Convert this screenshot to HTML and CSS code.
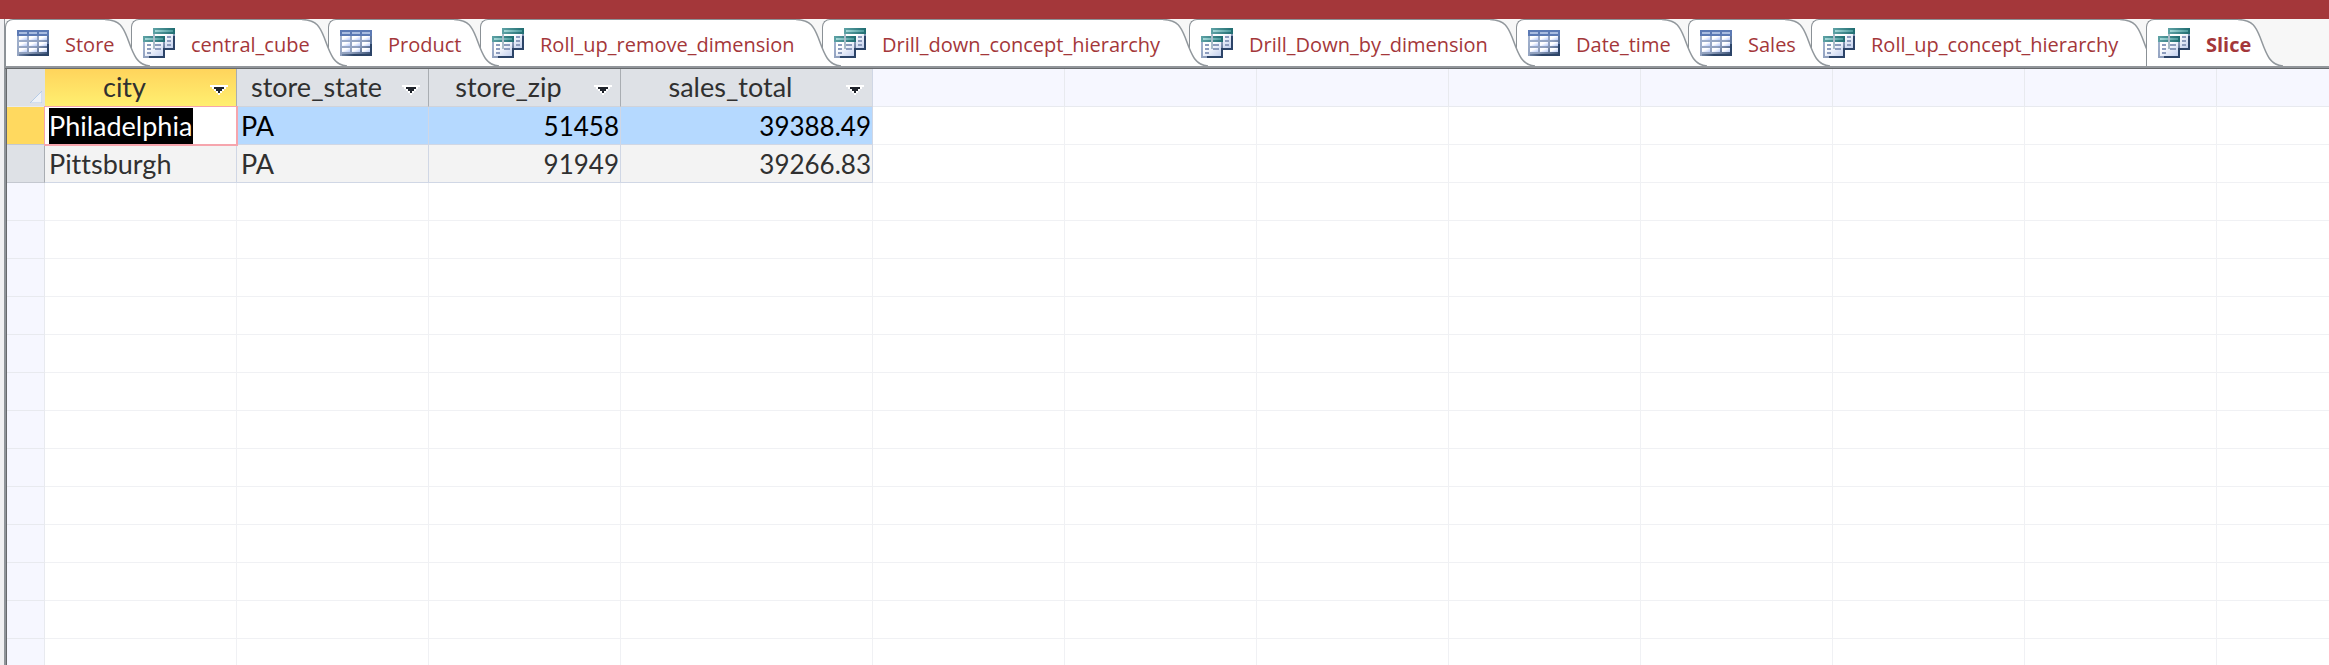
FILE: index.html
```html
<!DOCTYPE html>
<html lang="en">
<head>
<meta charset="utf-8">
<title>Slice</title>
<link rel="stylesheet" href="styles.css">
</head>
<body>
<svg class="defs" aria-hidden="true">
  <defs>
    <linearGradient id="cell" x1="0" y1="0" x2="1" y2="1"><stop offset="0.4" stop-color="#ffffff"/><stop offset="1" stop-color="#b4c8fa"/></linearGradient>
    <linearGradient id="frame" x1="0" y1="0" x2="1" y2="1"><stop offset="0" stop-color="#a9b9d4"/><stop offset="0.6" stop-color="#8f9fbd"/><stop offset="1" stop-color="#2c4468"/></linearGradient>
    <linearGradient id="edge" x1="0" y1="0" x2="1" y2="0"><stop offset="0" stop-color="#6f84a6"/><stop offset="0.4" stop-color="#2c4468"/></linearGradient>
    <linearGradient id="teal" x1="0" y1="0" x2="1" y2="0"><stop offset="0" stop-color="#5fa3a6"/><stop offset="1" stop-color="#1f6c70"/></linearGradient>
    <linearGradient id="shine" x1="0" y1="0" x2="1" y2="0"><stop offset="0" stop-color="#a5d8d8"/><stop offset="1" stop-color="#4d9a9c"/></linearGradient>
    <linearGradient id="page" x1="0" y1="0" x2="1" y2="1"><stop offset="0.3" stop-color="#ffffff"/><stop offset="1" stop-color="#c3d0ee"/></linearGradient>
    <symbol id="table" viewBox="0 0 32 26">
      <path fill="url(#frame)" d="M0 0h32v26H0z"/>
      <path fill="#5b79b4" d="M0 0h32v6H0z"/>
      <path fill="#a9bce0" d="M2 2h8v2H2zM12 2h8v2h-8zM22 2h8v2h-8z"/>
      <path fill="url(#edge)" d="M2 24h30v2H2z"/>
      <path fill="#5e759c" d="M30 6h2v8h-2z"/>
      <path fill="#2c4468" d="M30 14h2v12h-2z"/>
      <g fill="url(#cell)"><path d="M2 6h8v4H2z"/><path d="M12 6h8v4h-8z"/><path d="M22 6h8v4h-8z"/><path d="M2 12h8v4H2z"/><path d="M12 12h8v4h-8z"/><path d="M22 12h8v4h-8z"/><path d="M2 18h8v4H2z"/><path d="M12 18h8v4h-8z"/><path d="M22 18h8v4h-8z"/></g>
    </symbol>
    <symbol id="query" viewBox="0 0 32 30">
      <path fill="url(#frame)" d="M10 0h22v22H10z"/>
      <path fill="url(#page)" d="M12 6h18v14H12z"/>
      <path fill="url(#teal)" d="M10 0h22v6H10z"/>
      <path fill="url(#shine)" d="M12 2h18v2H12z"/>
      <path fill="#2c4468" d="M22 20h10v2H22zM30 8h2v14h-2z"/>
      <path fill="#8c9cbd" d="M24 8h4v2h-4zM24 12h4v2h-4zM24 16h4v2h-4z"/>
      <path fill="url(#frame)" d="M0 8h22v22H0z"/>
      <path fill="url(#page)" d="M2 14h18v14H2z"/>
      <path fill="url(#teal)" d="M0 8h22v6H0z"/>
      <path fill="url(#shine)" d="M2 10h18v2H2z"/>
      <path fill="none" stroke="#a9bcc8" stroke-width="2" d="M11 6v15"/>
      <path fill="#2c4468" d="M6 28h16v2H6zM20 20h2v10h-2z"/>
      <path fill="#8c9cbd" d="M4 16h4v2H4zM12 16h6v2h-6zM4 20h4v2H4zM12 20h6v2h-6zM4 24h4v2H4z"/>
    </symbol>
    <symbol id="tail" viewBox="0 0 46 47">
      <path class="tail-fill" d="M0 0C15 1 18 7 22 18C28 34 31 46 45 47H0z"/>
      <path class="tail-line" d="M0 0.500C15 1 18 8 22 18C28 34 31 46 45 47"/>
    </symbol>
    <symbol id="arrow" viewBox="0 0 18 10">
      <path fill="#fff" d="M0 0h18v2h-2v2h-2v2h-2v2h-2v2H8V8H6V6H4V4H2V2H0z"/>
      <path fill="#20242c" d="M4 2h10v2h-2v2h-2v2H8V6H6V4H4z"/>
    </symbol>
  </defs>
</svg>

<div class="titlebar"></div>
<main class="workspace">
  <nav class="tabs" role="tablist" aria-label="Open objects">
    <button class="tab" role="tab" style="--w:126px;--z:10"><svg class="icon icon-table"><use href="#table"/></svg><span>Store</span><svg class="tail"><use href="#tail"/></svg></button>
    <button class="tab" role="tab" style="--w:197px;--z:9"><svg class="icon icon-query"><use href="#query"/></svg><span>central_cube</span><svg class="tail"><use href="#tail"/></svg></button>
    <button class="tab" role="tab" style="--w:152px;--z:8"><svg class="icon icon-table"><use href="#table"/></svg><span>Product</span><svg class="tail"><use href="#tail"/></svg></button>
    <button class="tab" role="tab" style="--w:342px;--z:7"><svg class="icon icon-query"><use href="#query"/></svg><span>Roll_up_remove_dimension</span><svg class="tail"><use href="#tail"/></svg></button>
    <button class="tab" role="tab" style="--w:367px;--z:6"><svg class="icon icon-query"><use href="#query"/></svg><span>Drill_down_concept_hierarchy</span><svg class="tail"><use href="#tail"/></svg></button>
    <button class="tab" role="tab" style="--w:327px;--z:5"><svg class="icon icon-query"><use href="#query"/></svg><span>Drill_Down_by_dimension</span><svg class="tail"><use href="#tail"/></svg></button>
    <button class="tab" role="tab" style="--w:172px;--z:4"><svg class="icon icon-table"><use href="#table"/></svg><span>Date_time</span><svg class="tail"><use href="#tail"/></svg></button>
    <button class="tab" role="tab" style="--w:123px;--z:3"><svg class="icon icon-table"><use href="#table"/></svg><span>Sales</span><svg class="tail"><use href="#tail"/></svg></button>
    <button class="tab" role="tab" style="--w:335px;--z:2"><svg class="icon icon-query"><use href="#query"/></svg><span>Roll_up_concept_hierarchy</span><svg class="tail"><use href="#tail"/></svg></button>
    <button class="tab active" role="tab" aria-selected="true" style="--w:118px;--z:11"><svg class="icon icon-query"><use href="#query"/></svg><span>Slice</span><svg class="tail"><use href="#tail"/></svg></button>
  </nav>
  <div class="sheet">
    <table>
      <colgroup><col class="c-select"><col class="c-std" span="3"><col class="c-total"><col class="c-std" span="7"><col></colgroup>
      <thead>
        <tr>
          <th class="corner"><svg class="corner-mark" viewBox="0 0 12 12"><path d="M0 12L12 0V12z"/></svg></th>
          <th class="field current"><div class="head"><span>city</span><button aria-label="Filter city"><svg><use href="#arrow"/></svg></button></div></th>
          <th class="field"><div class="head"><span>store_state</span><button aria-label="Filter store_state"><svg><use href="#arrow"/></svg></button></div></th>
          <th class="field"><div class="head"><span>store_zip</span><button aria-label="Filter store_zip"><svg><use href="#arrow"/></svg></button></div></th>
          <th class="field last"><div class="head"><span>sales_total</span><button aria-label="Filter sales_total"><svg><use href="#arrow"/></svg></button></div></th>
          <th><th><th><th><th><th><th><th>
        </tr>
      </thead>
      <tbody>
        <tr class="row selected"><th></th><td class="editing"><input value="Philadelphia" aria-label="city"></td><td>PA</td><td class="num">51458</td><td class="num">39388.49</td><td class="blank"><td class="blank"><td class="blank"><td class="blank"><td class="blank"><td class="blank"><td class="blank"><td class="blank"></tr>
        <tr class="row"><th></th><td>Pittsburgh</td><td>PA</td><td class="num">91949</td><td class="num">39266.83</td><td class="blank"><td class="blank"><td class="blank"><td class="blank"><td class="blank"><td class="blank"><td class="blank"><td class="blank"></tr>
        <tr><th><td><td><td><td><td><td><td><td><td><td><td><td></tr>
        <tr><th><td><td><td><td><td><td><td><td><td><td><td><td></tr>
        <tr><th><td><td><td><td><td><td><td><td><td><td><td><td></tr>
        <tr><th><td><td><td><td><td><td><td><td><td><td><td><td></tr>
        <tr><th><td><td><td><td><td><td><td><td><td><td><td><td></tr>
        <tr><th><td><td><td><td><td><td><td><td><td><td><td><td></tr>
        <tr><th><td><td><td><td><td><td><td><td><td><td><td><td></tr>
        <tr><th><td><td><td><td><td><td><td><td><td><td><td><td></tr>
        <tr><th><td><td><td><td><td><td><td><td><td><td><td><td></tr>
        <tr><th><td><td><td><td><td><td><td><td><td><td><td><td></tr>
        <tr><th><td><td><td><td><td><td><td><td><td><td><td><td></tr>
        <tr><th><td><td><td><td><td><td><td><td><td><td><td><td></tr>
        <tr><th><td><td><td><td><td><td><td><td><td><td><td><td></tr>
      </tbody>
    </table>
  </div>
</main>
</body>
</html>
```
FILE: styles.css
```css
* { box-sizing: border-box; }

body {
  margin: 0;
  height: 100vh;
  display: flex;
  flex-direction: column;
  overflow: hidden;
  background: #f0f0f2;
  font-family: Lato, "Open Sans", sans-serif;
  font-variant-ligatures: none;
}

.defs { position: absolute; width: 0; height: 0; }

button {
  padding: 0;
  border: 0;
  background: none;
  font: inherit;
  color: inherit;
}

.titlebar { flex: none; height: 19px; background: #a4373a; }

.workspace {
  flex: 1;
  min-height: 0;
  display: flex;
  flex-direction: column;
  margin-left: 4px;
  border-left: 2px solid #8f9499;
}

/* Object tabs */
.tabs {
  flex: none;
  display: flex;
  height: 50px;
  margin-left: -1px;
  padding-bottom: 2px;
  border-bottom: 1px solid #66696c;
  background: linear-gradient(#f7f7f7 47px, #92969b 47px);
}

.tab {
  position: relative;
  z-index: var(--z);
  flex: none;
  display: flex;
  align-items: center;
  width: calc(var(--w) - 26px);
  height: 47px;
  margin-right: 26px;
  padding-left: 11px;
  border-top: 1px solid #8b9196;
  border-left: 1px solid #8b9196;
  border-top-left-radius: 8px;
  background: #fff;
  font: 20px/28px "Open Sans", sans-serif;
  color: #a4373a;
  white-space: nowrap;
}

.tab span { position: relative; z-index: 1; padding-top: 4px; }

.icon { flex: none; width: 32px; margin-right: 16px; shape-rendering: crispEdges; }
.icon-table { height: 26px; }
.icon-query { height: 30px; }

.tail {
  position: absolute;
  top: -1px;
  left: 100%;
  width: 46px;
  height: 47px;
}

.tail-fill { fill: #fff; }
.tail-line { fill: none; stroke: #92989d; stroke-width: 1.5px; }

.tab.active { font-weight: 700; }

/* Datasheet */
.sheet {
  flex: 1;
  min-height: 0;
  overflow: hidden;
  border-left: 1px solid #66696c;
  background: #fff;
}

table {
  width: 100%;
  table-layout: fixed;
  border-collapse: separate;
  border-spacing: 0;
  font-size: 27px;
  line-height: 36px;
  color: #303030;
}

.c-select { width: 38px; }
.c-std { width: 192px; }
.c-total { width: 252px; }

th, td {
  height: 38px;
  padding: 0;
  border: solid #f0f1f4;
  border-width: 0 1px 1px 0;
  font-weight: 400;
  text-align: left;
  white-space: nowrap;
}

th { background: #f6f7ff; border-color: #e8eaef; }
tr > :last-child { border-right: 0; }

.corner { background: #dee1e6; border-right: 0; vertical-align: bottom; }
.corner-mark { display: block; width: 12px; height: 12px; margin: 0 0 3px 23px; fill: #eff2f7; stroke: #b5cbe6; }

.field { background: #dee1e6; border-color: #d0d3da; border-right-color: #a9adb2; }
.field.last { border-right-color: #d0d7e5; }
.field.current { background: linear-gradient(#ffd45c, #ffef70); }

.head { display: flex; align-items: center; height: 36px; }
.head span { flex: 1; text-align: center; padding-bottom: 2px; }
.head button { flex: none; width: 32px; padding-left: 6px; padding-top: 5px; }
.head svg { display: block; width: 18px; height: 10px; shape-rendering: crispEdges; }

.row th { background: #dee1e6; border-right-color: #a9adb2; border-bottom-color: #c4c8d0; }
.row td { padding: 1px 3px 0 4px; background: #f3f3f3; border-color: #d0d7e5; }
.row td.num { padding-right: 1px; font-size: 26px; text-align: right; }
.row td.blank { background: #fff; border-color: #f0f1f4; }

.selected { color: #000; }
.row.selected th { background: #ffd95f; }
.selected td { background: #b5d9ff; }
.row.selected td:not(.editing, .blank) { background: #b5d9ff; }

.row td.editing { position: relative; background: #fff; }
.editing::after {
  content: "";
  position: absolute;
  inset: -1px -2px -2px -1px;
  border: solid #f6a5ad;
  border-width: 1px 2px 2px 1px;
  pointer-events: none;
}

.editing input {
  display: block;
  width: 144px;
  height: 36px;
  padding: 0;
  border: 0;
  outline: 0;
  background: #000;
  color: #fff;
  font: inherit;
}
```
